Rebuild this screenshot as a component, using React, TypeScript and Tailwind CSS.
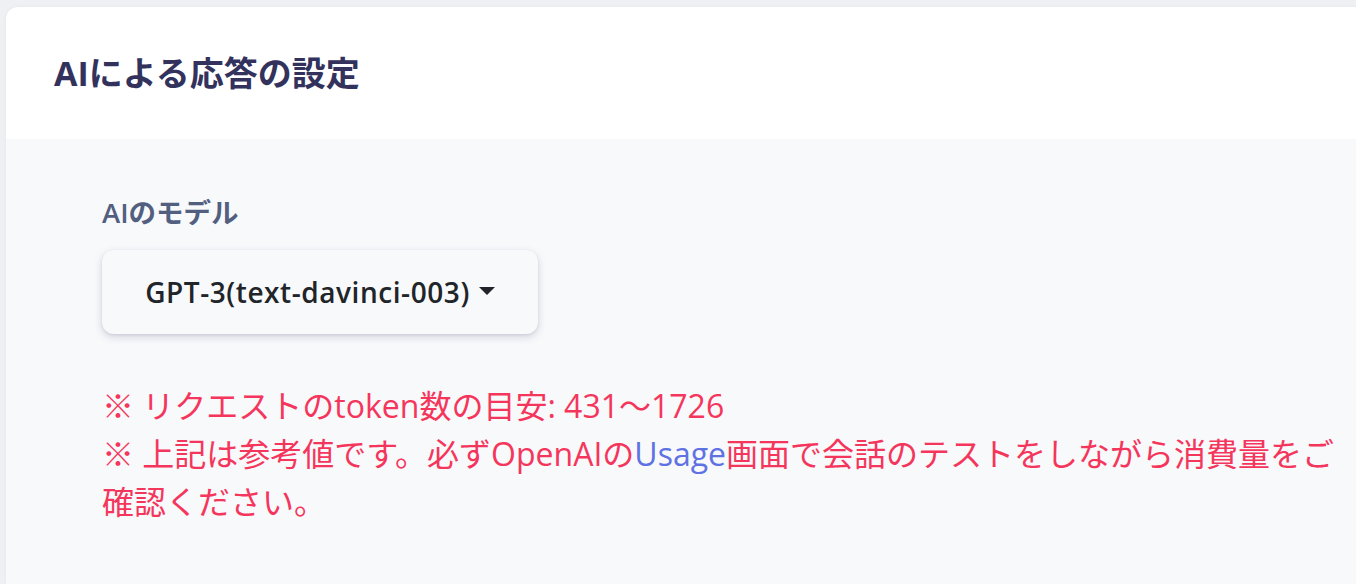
const font = { fontFamily: '"Open Sans", "Noto Sans CJK JP", sans-serif' };

export default function App() {
  return (
    <div className="h-[584px] w-full overflow-hidden bg-[#eef0f4] pl-[6px] pt-[7px]" style={font}>
      <div className="flex h-full flex-col overflow-hidden rounded-tl-xl bg-white shadow-[0_0_4px_rgba(0,0,0,0.04)]">
        <div className="flex h-[132px] items-center px-[48px]">
          <h1 className="text-[34px] font-bold text-[#32325d]">AIによる応答の設定</h1>
        </div>
        <div className="flex-1 bg-[#f8f9fb] px-[96px] pt-[55px]">
          <div className="text-[27.5px] font-semibold leading-[38px] text-[#525f7f]">AIのモデル</div>
          <button className="mt-[18px] flex h-[84px] w-[436px] items-center justify-center gap-[9px] rounded-xl bg-[#f8f9fb] shadow-[0_3px_8px_rgba(50,50,93,0.18),0_1px_3px_rgba(0,0,0,0.08)]">
            <span className="text-[28px] font-semibold tracking-[0.02em] text-[#212529]">GPT-3(text-davinci-003)</span>
            <span className="mt-[-2px] h-0 w-0 border-x-[8.5px] border-t-[8px] border-x-transparent border-t-[#212529]" />
          </button>
          <div className="mt-[48px] w-[1252px] text-[32px] leading-[48px] text-[#f5365c]">
            <p>※ リクエストのtoken数の目安: 431〜1726</p>
            <p>
              ※ 上記は参考値です。必ずOpenAIの<a className="text-[#5e72e4]">Usage</a>画面で会話のテストをしながら消費量をご確認ください。
            </p>
          </div>
        </div>
      </div>
    </div>
  );
}
